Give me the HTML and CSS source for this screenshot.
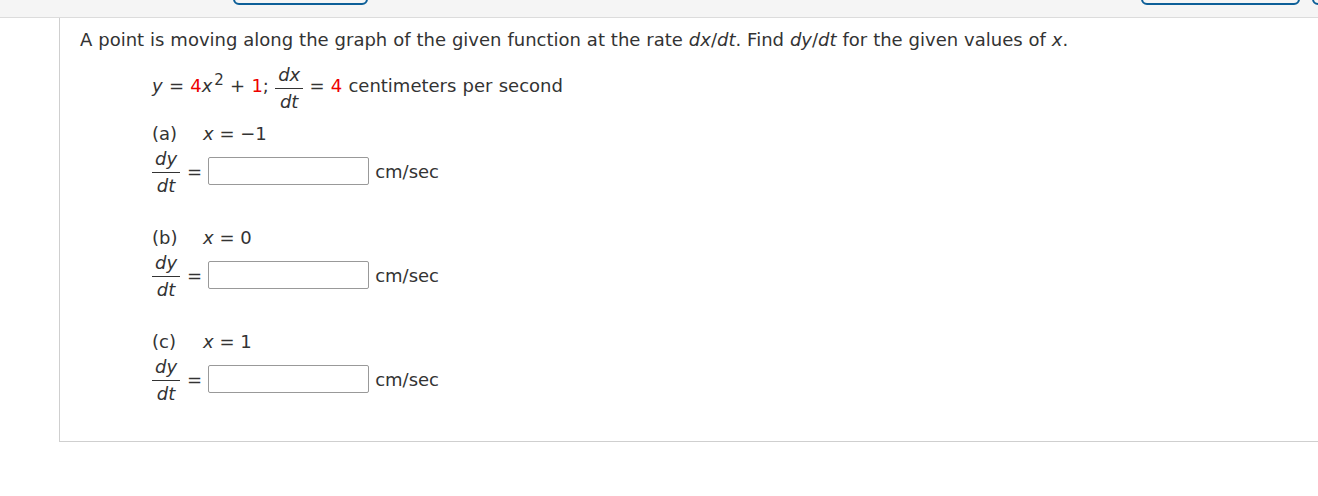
FILE: index.html
```html
<!DOCTYPE html>
<html>
<head>
<meta charset="utf-8">
<link rel="stylesheet" href="styles.css">
</head>
<body>
<div class="topbar">
  <div class="tbtn tbtn-a"></div>
  <div class="spacer"></div>
  <div class="tbtn tbtn-b"></div>
  <div class="tbtn tbtn-c"></div>
</div>
<div class="panel">
  <p class="prompt">A point is moving along the graph of the given function at the rate <i>dx</i>/<i>dt</i>. Find <i>dy</i>/<i>dt</i> for the given values of <i>x</i>.</p>
  <div class="given"><i>y</i> = <span class="red">4</span><i>x</i><sup>2</sup> + <span class="red">1</span>; <span class="frac"><span class="num"><i>dx</i></span><span class="den"><i>dt</i></span></span> = <span class="red">4</span> centimeters per second</div>

  <div class="part">
    <div class="label"><span class="letter">(a)</span><span><i>x</i> = −1</span></div>
    <div class="row">
      <span class="frac"><span class="num"><i>dy</i></span><span class="den"><i>dt</i></span></span>
      <span class="eq">=</span>
      <span class="input"></span>
      <span class="unit">cm/sec</span>
    </div>
  </div>

  <div class="part">
    <div class="label"><span class="letter">(b)</span><span><i>x</i> = 0</span></div>
    <div class="row">
      <span class="frac"><span class="num"><i>dy</i></span><span class="den"><i>dt</i></span></span>
      <span class="eq">=</span>
      <span class="input"></span>
      <span class="unit">cm/sec</span>
    </div>
  </div>

  <div class="part">
    <div class="label"><span class="letter">(c)</span><span><i>x</i> = 1</span></div>
    <div class="row">
      <span class="frac"><span class="num"><i>dy</i></span><span class="den"><i>dt</i></span></span>
      <span class="eq">=</span>
      <span class="input"></span>
      <span class="unit">cm/sec</span>
    </div>
  </div>
</div>
</body>
</html>
```

FILE: styles.css
```css
html, body {
  margin: 0;
  padding: 0;
  background: #fff;
  overflow: hidden;
}
body {
  font-family: "DejaVu Sans", Verdana, sans-serif;
  font-size: 18px;
  line-height: 24px;
  color: #333;
}
.topbar {
  background: #f5f5f5;
  border-bottom: 1px solid #dcdcdc;
  display: flex;
  align-items: flex-end;
  padding-bottom: 12px;
  height: 5px;
  overflow: hidden;
}
.tbtn {
  flex: none;
  height: 40px;
  border: 2px solid #0d5f98;
  border-radius: 6px;
  box-sizing: border-box;
  background: #f5f5f5;
}
.tbtn-a { margin-left: 233px; width: 135px; }
.spacer { flex: 1; }
.tbtn-b { width: 159px; }
.tbtn-c { width: 60px; margin-left: 12px; margin-right: -54px; }
.panel {
  margin-left: 59px;
  border-left: 1px solid #cfcfcf;
  border-bottom: 1px solid #cfcfcf;
  height: 424px;
  box-sizing: border-box;
  padding: 10px 0 0 20px;
}
.prompt {
  margin: 0;
  word-spacing: 0.2px;
}
.red { color: #e00; }
sup {
  font-size: 15px;
  line-height: 0;
  vertical-align: 7px;
  margin-left: 2px;
}
.given {
  margin: 12px 0 0 72px;
  white-space: pre;
  word-spacing: 0.5px;
}
.frac {
  display: inline-flex;
  flex-direction: column;
  align-items: stretch;
  text-align: center;
  word-spacing: 0;
}
.given .frac { vertical-align: 11px; }
.frac .num {
  line-height: 22px;
  padding: 0 3px 2px;
  border-bottom: 1px solid #333;
}
.frac .den {
  line-height: 21px;
  padding-top: 2px;
}
.part {
  margin: 0 0 0 72px;
  height: 104px;
}
.given + .part { margin-top: 10px; }
.label {
  display: flex;
}
.label .letter { width: 51px; }
.row {
  display: flex;
  align-items: flex-start;
  margin-top: 2px;
}
.eq {
  margin: 12px 6px 0 7px;
}
.input {
  margin-top: 9px;
  width: 161px;
  height: 28px;
  box-sizing: border-box;
  border: 1px solid #999;
  border-radius: 2px;
  background: #fff;
}
.unit {
  margin: 12px 0 0 6px;
}
```
